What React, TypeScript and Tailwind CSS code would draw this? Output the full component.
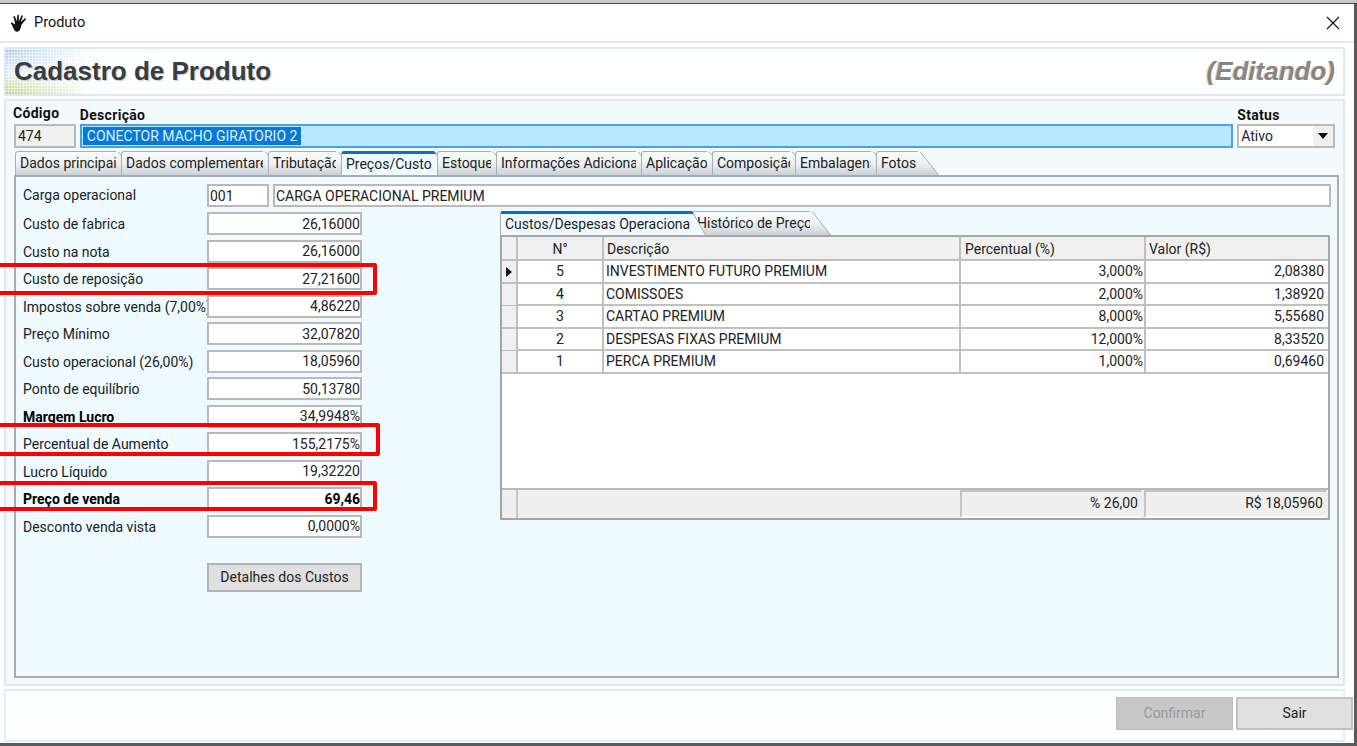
const rows: { label: string; value: string; bold?: boolean }[] = [
  { label: "Custo de fabrica", value: "26,16000" },
  { label: "Custo na nota", value: "26,16000" },
  { label: "Custo de reposição", value: "27,21600" },
  { label: "Impostos sobre venda (7,00%)", value: "4,86220" },
  { label: "Preço Mínimo", value: "32,07820" },
  { label: "Custo operacional (26,00%)", value: "18,05960" },
  { label: "Ponto de equilíbrio", value: "50,13780" },
  { label: "Margem Lucro", value: "34,9948%", bold: true },
  { label: "Percentual de Aumento", value: "155,2175%" },
  { label: "Lucro Líquido", value: "19,32220" },
  { label: "Preço de venda", value: "69,46", bold: true },
  { label: "Desconto venda vista", value: "0,0000%" },
];

const tabs = [
  { t: "Dados principais", w: "w-[101px]", active: false },
  { t: "Dados complementares", w: "w-[142px]", active: false },
  { t: "Tributação", w: "w-[68px]", active: false },
  { t: "Preços/Custos", w: "w-[91px]", active: true },
  { t: "Estoque", w: "w-[54px]", active: false },
  { t: "Informações Adicionais", w: "w-[140px]", active: false },
  { t: "Aplicação", w: "w-[66px]", active: false },
  { t: "Composição", w: "w-[78px]", active: false },
  { t: "Embalagens", w: "w-[76px]", active: false },
  { t: "Fotos", w: "w-[42px]", active: false },
];

const grid = [
  ["5", "INVESTIMENTO FUTURO PREMIUM", "3,000%", "2,08380"],
  ["4", "COMISSOES", "2,000%", "1,38920"],
  ["3", "CARTAO PREMIUM", "8,000%", "5,55680"],
  ["2", "DESPESAS FIXAS PREMIUM", "12,000%", "8,33520"],
  ["1", "PERCA PREMIUM", "1,000%", "0,69460"],
];

function Tab({ t, w, active }: { t: string; w: string; active: boolean }) {
  return (
    <div className="flex h-[24px] -mr-[16px] relative">
      <div
        className={`${w} h-[24px] rounded-tl-[3px] border-l border-[#a8b0b4] flex items-center pl-[4px] whitespace-nowrap text-[14px] text-[#222] ${
          active
            ? "border-t-[3px] border-t-[#0b6fc4] bg-[#eefaff]"
            : "border-t bg-gradient-to-b from-[#fbfcfd] via-[#eef1f3] to-[#c9d1d5]"
        }`}
      >
        {t}
      </div>
      <svg width="21" height="24" viewBox="0 0 21 24" className="shrink-0">
        <defs>
          <linearGradient id="tabg" x1="0" y1="0" x2="0" y2="1">
            <stop offset="0" stopColor="#fbfcfd" />
            <stop offset="0.5" stopColor="#eef1f3" />
            <stop offset="1" stopColor="#c9d1d5" />
          </linearGradient>
        </defs>
        <path d="M0 0 L0 24 L21 24 L2 0 Z" fill={active ? "#eefaff" : "url(#tabg)"} />
        <path d="M2 0.5 L20.5 24" stroke="#a8b0b4" fill="none" />
        {active && <path d="M0 0 L2 0 L4.4 3 L0 3 Z" fill="#0b6fc4" />}
      </svg>
    </div>
  );
}

function Field({ children, className = "" }: { children?: React.ReactNode; className?: string }) {
  return (
    <div className={`h-[23px] border-2 border-[#b9b9b9] bg-white flex items-center text-[14px] text-[#222] leading-none ${className}`}>
      {children}
    </div>
  );
}

function Hand() {
  return (
    <svg width="20" height="20" viewBox="0 0 20 20" className="shrink-0">
      <path d="M6 18 C4 15 3.5 13 2 10.5 C1.5 9.5 3 9 4 10 L5.5 11.5 L6 10 L4.5 4 C4.3 3 5.6 2.6 6 3.6 L7.6 8.2 L8.3 2.4 C8.4 1.2 9.8 1.3 9.8 2.5 L9.8 8.2 L12.4 2.8 C12.9 1.9 14 2.5 13.7 3.5 L11.8 9 L15.6 5.6 C16.5 4.9 17.4 5.9 16.6 6.7 L12.6 11.5 C11.8 14 11.5 16.5 10 18 C9 19 7 19 6 18 Z" fill="#111" />
    </svg>
  );
}

export default function App() {
  return (
    <div className="relative w-[1357px] h-[746px] overflow-hidden bg-[#5a5a5a] font-['Roboto','Liberation_Sans',sans-serif] text-[14px] text-[#222]">
      <div className="h-[4px] bg-[#c9c9c9] border-b border-[#444]" />
      <div className="w-[1354px] h-[739px] bg-white flex flex-col">
        {/* title bar */}
        <div className="h-[39px] flex items-center pl-[9px] pr-[14px] gap-[5px] border-b-2 border-[#dfeaf6] shrink-0">
          <Hand />
          <span className="text-[14.5px] text-[#111]">Produto</span>
          <svg width="14" height="14" viewBox="0 0 14 14" className="ml-auto">
            <path d="M1 1 L13 13 M13 1 L1 13" stroke="#111" strokeWidth="1.1" />
          </svg>
        </div>

        <div className="flex-1 px-[4px] pt-[4px] pb-[1px] flex flex-col gap-[3px] w-[1349px]">
          {/* header */}
          <div className="h-[49px] shrink-0 border-2 border-[#dbe8f8] flex items-center justify-between pl-[8px] pr-[8px] font-['Liberation_Sans',sans-serif] font-bold bg-[linear-gradient(to_right,transparent,#fff_86px),repeating-linear-gradient(90deg,transparent_0,transparent_2px,#ffffff88_2px,#ffffff88_3px),repeating-linear-gradient(0deg,transparent_0,transparent_2px,#ffffff88_2px,#ffffff88_3px),linear-gradient(to_bottom,#a9c8ec,#e8f0f4_55%,#bcd47c)]">
            <span className="text-[26px] text-[#3c3c3c] [text-shadow:1px_1px_0_#b9d3ee]">Cadastro de Produto</span>
            <span className="text-[26px] italic text-[#868686] [text-shadow:-1px_0_0_#e2c8a8]">(Editando)</span>
          </div>

          {/* main panel */}
          <div className="h-[587px] shrink-0 border-2 border-[#dbe8f8] bg-[#f3fafe] pl-[8px] pr-[8px] flex flex-col">
            {/* top fields */}
            <div className="flex gap-[4px] h-[48px] pt-[3px] shrink-0">
              <div className="w-[62px] flex flex-col">
                <span className="h-[18px] font-bold text-[14px] text-[#111] leading-[18px] -ml-[1px] tracking-[0.3px]">Código</span>
                <Field className="!bg-[#f0f0f0] pl-[2px] mt-[2px] h-[24px]">474</Field>
              </div>
              <div className="w-[1156px] flex flex-col">
                <span className="h-[20px] font-bold text-[14px] text-[#111] leading-[22px] tracking-[0.3px]">Descrição</span>
                <div className="h-[24px] border-2 border-[#4ba0e6] bg-[#b8e8ff] flex items-center pl-[1px]">
                  <span className="bg-[#0a78d7] text-[#d9f1ff] h-[18px] leading-[18px] px-[4px] text-[14px] whitespace-nowrap">CONECTOR MACHO GIRATORIO 2</span>
                </div>
              </div>
              <div className="w-[98px] flex flex-col">
                <span className="h-[20px] font-bold text-[14px] text-[#111] leading-[22px] tracking-[0.3px]">Status</span>
                <Field className="h-[24px] pl-[2px] pr-0 justify-between">
                  Ativo
                  <span className="w-[20px] h-[20px] bg-[#f0f0f0] flex items-center justify-center">
                    <svg width="10" height="6" viewBox="0 0 10 6"><path d="M0 0 L10 0 L5 6 Z" fill="#111" /></svg>
                  </span>
                </Field>
              </div>
            </div>

            {/* tabs */}
            <div className="flex h-[24px] mt-[2px] pl-[1px] shrink-0">
              {tabs.map((x) => <Tab key={x.t} {...x} />)}
            </div>

            {/* content */}
            <div className="h-[503px] w-[1325px] border-2 border-[#ababab] border-t-2 bg-[#eefaff] pl-[7px] pt-[7px] flex flex-col shrink-0 relative">
              <div className="flex items-center h-[23px]">
                <span className="w-[184px] text-[14px] text-[#222]">Carga operacional</span>
                <Field className="w-[62px] pl-[1px]">001</Field>
                <Field className="w-[1058px] ml-[4px] pl-[1px]">CARGA OPERACIONAL PREMIUM</Field>
              </div>

              <div className="flex mt-[5px]">
                <div className="flex flex-col gap-[4.5px] w-[339px] shrink-0">
                  {rows.map((r) => (
                    <div key={r.label} className="flex items-center h-[23px]">
                      <span className={`w-[184px] whitespace-nowrap text-[14px] pt-[2px] ${r.bold ? "font-bold text-black" : ""}`}>{r.label}</span>
                      <Field className={`w-[155px] justify-end pr-[0px] ${r.bold && r.value === "69,46" ? "font-bold text-black" : ""}`}>{r.value}</Field>
                    </div>
                  ))}
                  <button className="ml-[184px] w-[155px] h-[29px] mt-[21px] bg-[#e0e0e0] border-2 border-[#b4b4b4] text-[14px] text-[#222]">Detalhes dos Custos</button>
                </div>

                {/* right grid */}
                <div className="ml-[138px] -mt-[1px] w-[830px] flex flex-col">
                  <div className="flex h-[24px] shrink-0">
                    <div className="flex h-[24px] -mr-[14px] relative">
                      <div className="w-[190px] h-[24px] rounded-tl-[3px] border-l border-[#a8b0b4] border-t-[3px] border-t-[#0b6fc4] bg-[#eefaff] flex items-center pl-[4px] whitespace-nowrap">Custos/Despesas Operacionais</div>
                      <svg width="16" height="24" viewBox="0 0 16 24"><path d="M0 0 L0 24 L16 24 L2 0 Z" fill="#eefaff" /><path d="M2 0.5 L15.5 24" stroke="#a8b0b4" fill="none" /><path d="M0 0 L2 0 L3.8 3 L0 3 Z" fill="#0b6fc4" /></svg>
                    </div>
                    <div className="flex h-[24px]">
                      <div className="w-[118px] h-[24px] rounded-tl-[3px] border-l border-t border-[#a8b0b4] bg-gradient-to-b from-[#fbfcfd] via-[#eef1f3] to-[#c9d1d5] flex items-center pl-[4px] whitespace-nowrap">Histórico de Preço</div>
                      <svg width="22" height="24" viewBox="0 0 22 24"><path d="M0 0 L0 24 L21 24 L2 0 Z" fill="url(#tabg)" /><path d="M2 0.5 L20.5 24" stroke="#a8b0b4" fill="none" /></svg>
                    </div>
                  </div>
                  <div className="w-[830px] h-[285px] border-2 border-[#a6a6a6] bg-white flex flex-col shrink-0">
                    <div className="grid grid-cols-[16px_86px_357px_185px_1fr] h-[24px] bg-[#f0f0f0] border-b-2 border-[#c0c0c0] text-[14px] shrink-0">
                      <div className="border-r-2 border-[#c0c0c0]" />
                      <div className="border-r-2 border-[#c0c0c0] text-center leading-[24px]">N°</div>
                      <div className="border-r-2 border-[#c0c0c0] pl-[3px] leading-[24px]">Descrição</div>
                      <div className="border-r-2 border-[#c0c0c0] pl-[4px] leading-[24px]">Percentual (%)</div>
                      <div className="pl-[3px] leading-[24px]">Valor (R$)</div>
                    </div>
                    {grid.map((r, i) => (
                      <div key={r[0]} className="grid grid-cols-[16px_86px_357px_185px_1fr] h-[22.5px] border-b-2 border-[#c0c0c0] text-[14px] shrink-0 leading-[21px]">
                        <div className="border-r-2 border-[#c0c0c0] bg-[#f0f0f0] flex items-center justify-center">
                          {i === 0 && <svg width="6" height="10" viewBox="0 0 6 10"><path d="M0 0 L6 5 L0 10 Z" fill="#111" /></svg>}
                        </div>
                        <div className="border-r-2 border-[#c0c0c0] text-center">{r[0]}</div>
                        <div className="border-r-2 border-[#c0c0c0] pl-[2px] whitespace-nowrap">{r[1]}</div>
                        <div className="border-r-2 border-[#c0c0c0] text-right pr-[1px]">{r[2]}</div>
                        <div className="text-right pr-[4px]">{r[3]}</div>
                      </div>
                    ))}
                    <div className="flex-1" />
                    <div className="grid grid-cols-[16px_442px_183px_1fr] h-[30px] bg-[#efefef] border-t-2 border-[#b8b8b8] shrink-0">
                      <div className="border-r-2 border-[#c8c8c8]" />
                      <div />
                      <div className="border-l-2 border-t-2 border-[#c4c4c4] text-right pr-[3px] leading-[22px] mr-[2px] border-b-2 border-b-white">% 26,00</div>
                      <div className="border-l-2 border-t-2 border-[#c4c4c4] text-right pr-[3px] leading-[22px] mr-[2px] ml-[1px] border-b-2 border-b-white">R$ 18,05960</div>
                    </div>
                  </div>
                </div>
              </div>
            </div>
          </div>

          {/* bottom */}
          <div className="h-[53px] shrink-0 border-2 border-[#e3edf8] bg-gradient-to-b from-[#fbfdff] to-white flex items-start justify-end gap-[3px] pt-[6px] -mr-[0px]">
            <button className="w-[117px] h-[33px] bg-[#c8c8c8] border border-[#bdbdbd] text-[#989898] text-[14px]">Confirmar</button>
            <button className="w-[117px] h-[33px] bg-[#e0e0e0] border-2 border-[#c2c2c2] text-[#222] text-[14px] mr-[-10px] relative">Sair</button>
          </div>
        </div>
      </div>

      {/* red annotation rectangles */}
      <div className="absolute left-[-4px] top-[263px] w-[381px] h-[32px] border-[4px] border-[#ff0000] rounded-[2px] pointer-events-none" />
      <div className="absolute left-[-4px] top-[423px] w-[384px] h-[33px] border-[4px] border-[#ff0000] rounded-[2px] pointer-events-none" />
      <div className="absolute left-[-4px] top-[481px] w-[381px] h-[30px] border-[4px] border-[#ff0000] rounded-[2px] pointer-events-none" />
    </div>
  );
}
